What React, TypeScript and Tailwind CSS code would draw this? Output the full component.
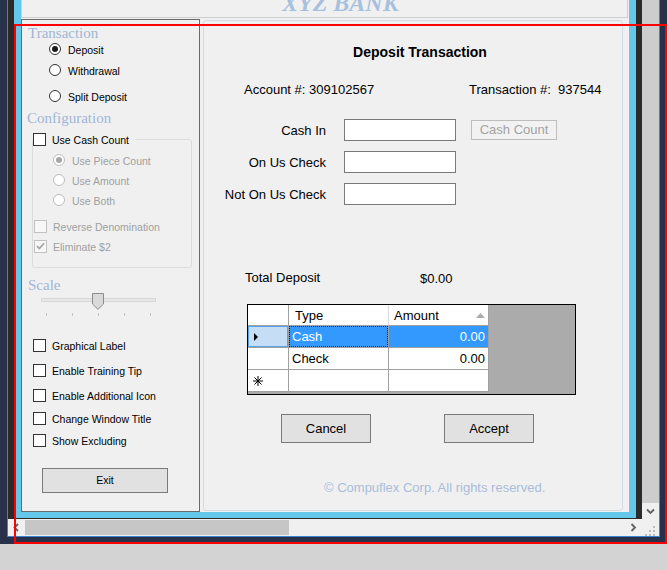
import clsx from 'clsx';

type OptionProps = {
  kind: 'radio' | 'check';
  label: string;
  checked?: boolean;
  disabled?: boolean;
  className?: string;
};

function Radio({ checked, disabled }: { checked?: boolean; disabled?: boolean }) {
  return (
    <span
      className={clsx(
        'flex h-[12px] w-[12px] shrink-0 items-center justify-center rounded-full border bg-white',
        disabled ? 'border-[#bcbcbc]' : 'border-[#333333]'
      )}
    >
      {checked && (
        <span className={clsx('h-[6px] w-[6px] rounded-full', disabled ? 'bg-[#a6a6a6]' : 'bg-[#1a1a1a]')} />
      )}
    </span>
  );
}

function Check({ checked, disabled }: { checked?: boolean; disabled?: boolean }) {
  return (
    <span
      className={clsx(
        'flex h-[13px] w-[13px] shrink-0 items-center justify-center border',
        disabled ? 'border-[#c2c2c2] bg-[#f7f7f7]' : 'border-[#333333] bg-white'
      )}
    >
      {checked && (
        <svg width="9" height="8" viewBox="0 0 9 8">
          <path d="M1 4.2 L3.4 6.5 L8 1.3" fill="none" stroke={disabled ? '#a3a3a3' : '#222'} strokeWidth="1.7" />
        </svg>
      )}
    </span>
  );
}

function Option({ kind, label, checked, disabled, className }: OptionProps) {
  return (
    <div
      className={clsx(
        'flex h-[14px] items-center leading-[14px]',
        kind === 'radio' ? 'gap-[7px]' : 'gap-[6px]',
        disabled ? 'text-[#a0a0a0]' : 'text-black',
        className
      )}
    >
      {kind === 'radio' ? <Radio checked={checked} disabled={disabled} /> : <Check checked={checked} disabled={disabled} />}
      <span className="whitespace-nowrap pt-[1px]">{label}</span>
    </div>
  );
}

function Chevron({ dir }: { dir: 'left' | 'right' | 'down' }) {
  const pts = dir === 'left' ? '5,1 1.5,4.5 5,8' : dir === 'right' ? '1.5,1 5,4.5 1.5,8' : '1,1.5 4.5,5 8,1.5';
  const size = dir === 'down' ? { w: 9, h: 7 } : { w: 7, h: 9 };
  return (
    <svg width={size.w} height={size.h} viewBox={`0 0 ${size.w} ${size.h}`}>
      <polyline points={pts} fill="none" stroke="#606060" strokeWidth="1.8" />
    </svg>
  );
}

function LeftPanel() {
  return (
    <div className="flex h-[493px] w-[179px] shrink-0 flex-col border border-[#6a6a6a] text-[10.5px]">
      <div className="ml-[6px] mt-[5px] h-[16px] font-['Liberation_Serif',serif] text-[15px] leading-[16px] text-[#a0b6d6]">
        Transaction
      </div>
      <Option kind="radio" label="Deposit" checked className="ml-[27px] mt-[1px]" />
      <Option kind="radio" label="Withdrawal" className="ml-[27px] mt-[7px]" />
      <Option kind="radio" label="Split Deposit" className="ml-[27px] mt-[12px]" />
      <div className="ml-[5px] mt-[7px] h-[16px] font-['Liberation_Serif',serif] text-[15px] leading-[16px] text-[#a0b6d6]">
        Configuration
      </div>

      <fieldset className="ml-[10px] mt-[6px] w-[160px] rounded-[3px] border border-[#dcdcdc] pb-[14px]">
        <legend className="flex h-[14px] items-center gap-[6px] pr-[6px] leading-[14px] text-black">
          <Check />
          <span className="whitespace-nowrap pt-[1px]">Use Cash Count</span>
        </legend>
        <Option kind="radio" label="Use Piece Count" checked disabled className="ml-[20px] mt-[7px]" />
        <Option kind="radio" label="Use Amount" disabled className="ml-[20px] mt-[6px]" />
        <Option kind="radio" label="Use Both" disabled className="ml-[20px] mt-[6px]" />
        <Option kind="check" label="Reverse Denomination" disabled className="ml-[1px] mt-[12px]" />
        <Option kind="check" label="Eliminate $2" checked disabled className="ml-[1px] mt-[6px]" />
      </fieldset>

      <div className="ml-[6px] mt-[9px] h-[16px] font-['Liberation_Serif',serif] text-[15px] leading-[16px] text-[#a0b6d6]">
        Scale
      </div>

      {/* trackbar */}
      <div className="relative ml-[19px] h-[24px] w-[115px]">
        <div className="mt-[5px] h-[4px] border border-[#d6d6d6] bg-[#e7e7e7]" />
        <div className="mt-[11px] flex h-[3px] justify-between px-[5px]">
          {[0, 1, 2, 3, 4].map((i) => (
            <span key={i} className="h-[3px] w-px bg-[#c4c4c4]" />
          ))}
        </div>
        <svg className="absolute left-[51px] top-0" width="12" height="17" viewBox="0 0 12 17">
          <path d="M0.5 0.5 H11.5 V11 L6 16.3 L0.5 11 Z" fill="#dadada" stroke="#8c8c8c" strokeWidth="1" />
        </svg>
      </div>

      <Option kind="check" label="Graphical Label" className="ml-[11px] mt-[21px]" />
      <Option kind="check" label="Enable Training Tip" className="ml-[11px] mt-[11px]" />
      <Option kind="check" label="Enable Additional Icon" className="ml-[11px] mt-[11px]" />
      <Option kind="check" label="Change Window Title" className="ml-[11px] mt-[9px]" />
      <Option kind="check" label="Show Excluding" className="ml-[11px] mt-[8px]" />

      <button className="ml-[20px] mt-[21px] h-[25px] w-[126px] border border-[#7a7a7a] bg-[#e1e1e1] text-[10.5px] text-black">
        Exit
      </button>
    </div>
  );
}

function FieldRow({ label, extra }: { label: string; extra?: boolean }) {
  return (
    <div className="flex h-[22px] items-center">
      <span className="w-[122px] whitespace-nowrap pt-[1px] text-right leading-[16px]">{label}</span>
      <div className="ml-[18px] h-[22px] w-[112px] border border-[#7a7a7a] bg-white" />
      {extra && (
        <button className="ml-[15px] h-[20px] w-[86px] border border-[#bdbdbd] bg-[#f2f2f2] text-[13px] leading-[18px] text-[#a3a3a3]">
          Cash Count
        </button>
      )}
    </div>
  );
}

function Grid() {
  const line = 'border-[#a0a0a0]';
  return (
    <div className="ml-[43px] mt-[19px] h-[91px] w-[329px] border border-black bg-[#ababab]">
      <div className="w-[241px]">
        <div className="flex h-[21px] bg-white">
          <div className={clsx('w-[41px] border-b border-r', line)} />
          <div className="w-[100px] border-b border-r border-b-[#a0a0a0] border-r-[#d9d9d9] pl-[6px] pt-[1px] leading-[20px]">Type</div>
          <div className="flex w-[100px] items-center justify-between border-b border-r border-b-[#a0a0a0] border-r-[#a0a0a0] pl-[5px] pr-[3px] pt-[1px] leading-[19px]">
            <span>Amount</span>
            <svg width="9" height="5" viewBox="0 0 9 5">
              <path d="M0 5 L4.5 0 L9 5 Z" fill="#ababab" />
            </svg>
          </div>
        </div>

        <div className="flex h-[22px]">
          <div className={clsx('flex w-[41px] items-center border-b border-r bg-[#c5def6] pl-[6px] ring-1 ring-inset ring-[#5aa2e6]', line)}>
            <svg width="4" height="8" viewBox="0 0 4 8">
              <path d="M0 0 L4 4 L0 8 Z" fill="#000" />
            </svg>
          </div>
          <div className={clsx('w-[100px] border-b border-r bg-[#3399ff]', line)}>
            <div className="h-full border border-dotted border-[#111] pl-[2px] leading-[19px] text-white">Cash</div>
          </div>
          <div className={clsx('w-[100px] border-b border-r bg-[#3399ff] pr-[3px] text-right leading-[21px] text-white', line)}>0.00</div>
        </div>

        <div className="flex h-[22px] bg-white">
          <div className={clsx('w-[41px] border-b border-r', line)} />
          <div className={clsx('w-[100px] border-b border-r pl-[3px] leading-[21px]', line)}>Check</div>
          <div className={clsx('w-[100px] border-b border-r pr-[3px] text-right leading-[21px]', line)}>0.00</div>
        </div>

        <div className="flex h-[22px] bg-white">
          <div className={clsx('flex w-[41px] items-center border-b border-r pl-[5px]', line)}>
            <svg width="10" height="10" viewBox="0 0 10 10">
              <g stroke="#000" strokeWidth="1">
                <line x1="5" y1="0" x2="5" y2="10" />
                <line x1="0" y1="5" x2="10" y2="5" />
                <line x1="1.5" y1="1.5" x2="8.5" y2="8.5" />
                <line x1="8.5" y1="1.5" x2="1.5" y2="8.5" />
              </g>
            </svg>
          </div>
          <div className={clsx('w-[100px] border-b border-r', line)} />
          <div className={clsx('w-[100px] border-b border-r', line)} />
        </div>
      </div>
    </div>
  );
}

function RightPanel() {
  return (
    <div className="mt-[1px] flex h-[491px] w-[420px] shrink-0 flex-col rounded-[3px] border border-[#d6dbe2] text-[13px] text-black">
      <div className="mt-[23px] h-[16px] pl-[14px] text-center text-[14px] font-bold leading-[16px]">Deposit Transaction</div>

      <div className="mt-[22px] flex h-[16px] pl-[40px] leading-[16px]">
        <span className="w-[225px] whitespace-nowrap">Account #: 309102567</span>
        <span className="whitespace-pre">Transaction #:  937544</span>
      </div>

      <div className="mt-[21px]">
        <FieldRow label="Cash In" extra />
      </div>
      <div className="mt-[10px]">
        <FieldRow label="On Us Check" />
      </div>
      <div className="mt-[10px]">
        <FieldRow label="Not On Us Check" />
      </div>

      <div className="mt-[65px] flex h-[16px] pl-[41px] leading-[16px]">
        <span className="w-[175px]">Total Deposit</span>
        <span className="pt-[1px]">$0.00</span>
      </div>

      <div className="-mt-px">
        <Grid />
      </div>

      <div className="ml-[77px] mt-[19px] flex gap-[73px]">
        <button className="h-[29px] w-[90px] border border-[#7a7a7a] bg-[#e1e1e1] text-[13px]">Cancel</button>
        <button className="h-[29px] w-[90px] border border-[#7a7a7a] bg-[#e1e1e1] text-[13px]">Accept</button>
      </div>

      <div className="mt-[37px] h-[16px] whitespace-nowrap pl-[120px] leading-[16px] text-[#a9bddb]">
        © Compuflex Corp. All rights reserved.
      </div>
    </div>
  );
}

function Form() {
  return (
    <div className="flex h-[512px] w-[608px] flex-col bg-[#f0f0f0]">
      {/* banner, scrolled partly out of view */}
      <div className="h-[18px] w-[607px] overflow-hidden border-x border-b border-[#cfcfcf]">
        <div className="-mt-[9px] pl-[260px] font-['Liberation_Serif',serif] text-[24px] font-bold italic leading-[24px] text-[#a6c0de]">
          XYZ BANK
        </div>
      </div>
      <div className="mt-[1px] flex gap-[3px]">
        <LeftPanel />
        <RightPanel />
      </div>
    </div>
  );
}

function VScroll() {
  return (
    <div className="flex w-[17px] flex-col bg-[#f0f0f0]">
      <div className="h-[503px] bg-[#cdcdcd]" />
      <div className="flex flex-1 items-center justify-center">
        <Chevron dir="down" />
      </div>
    </div>
  );
}

function HScroll() {
  return (
    <div className="flex h-[17px] bg-[#f0f0f0]">
      <div className="flex w-[17px] items-center justify-center">
        <Chevron dir="left" />
      </div>
      <div className="my-[1px] w-[264px] bg-[#c6c6c6]" />
      <div className="flex-1" />
      <div className="flex w-[17px] items-center justify-center">
        <Chevron dir="right" />
      </div>
      <div className="w-[17px]">
        <svg width="17" height="17" viewBox="0 0 17 17">
          <g fill="#bdbdbd">
            <rect x="11" y="7" width="2" height="2" />
            <rect x="7" y="11" width="2" height="2" />
            <rect x="11" y="11" width="2" height="2" />
            <rect x="3" y="15" width="2" height="2" />
            <rect x="7" y="15" width="2" height="2" />
            <rect x="11" y="15" width="2" height="2" />
          </g>
        </svg>
      </div>
    </div>
  );
}

export default function App() {
  return (
    <div className="relative flex h-[570px] w-[667px] flex-col overflow-hidden bg-[#d3d3d3] font-['Liberation_Sans',Arial,sans-serif]">
      <div className="flex h-[544px] shrink-0 bg-[#27324a] px-[7px]">
        <div className="flex h-[537px] w-[653px] flex-col border-x border-b border-[#3b83d4]">
          <div className="flex h-[519px]">
            <div className="flex w-[634px] flex-col bg-[#2b2b2b] px-[6px] pb-[1px]">
              <div className="flex flex-col bg-[#65c8ea] px-[7px] pb-[6px]">
                <Form />
              </div>
            </div>
            <VScroll />
          </div>
          <HScroll />
        </div>
      </div>

      {/* red annotation frame drawn over the capture */}
      <div className="pointer-events-none absolute left-[14px] top-[24px] h-[520px] w-[653px] border-2 border-[#ff0000]" />
    </div>
  );
}
